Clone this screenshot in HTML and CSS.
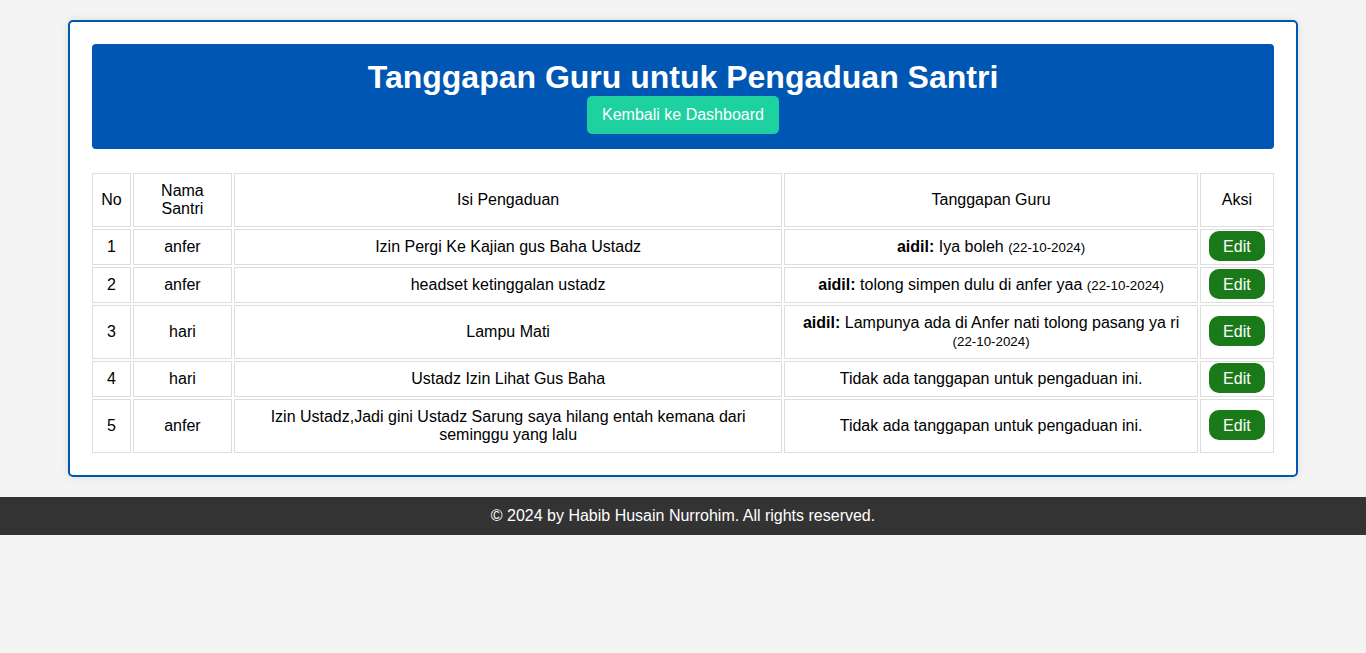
FILE: index.html
```html
<!DOCTYPE html>
<html lang="id">
<head>
<meta charset="utf-8">
<title>Tanggapan Guru</title>
<link rel="stylesheet" href="styles.css">
</head>
<body>
<div class="container">
  <div class="header">
    <h1>Tanggapan Guru untuk Pengaduan Santri</h1>
    <a class="btn-back" href="#">Kembali ke Dashboard</a>
  </div>
  <table class="tbl">
    <thead>
      <tr>
        <th>No</th>
        <th>Nama Santri</th>
        <th>Isi Pengaduan</th>
        <th>Tanggapan Guru</th>
        <th>Aksi</th>
      </tr>
    </thead>
    <tbody>
      <tr>
        <td>1</td>
        <td>anfer</td>
        <td>Izin Pergi Ke Kajian gus Baha Ustadz</td>
        <td><strong>aidil:</strong> Iya boleh <small>(22-10-2024)</small></td>
        <td><a class="btn-edit" href="#">Edit</a></td>
      </tr>
      <tr>
        <td>2</td>
        <td>anfer</td>
        <td>headset ketinggalan ustadz</td>
        <td><strong>aidil:</strong> tolong simpen dulu di anfer yaa <small>(22-10-2024)</small></td>
        <td><a class="btn-edit" href="#">Edit</a></td>
      </tr>
      <tr>
        <td>3</td>
        <td>hari</td>
        <td>Lampu Mati</td>
        <td><strong>aidil:</strong> Lampunya ada di Anfer nati tolong pasang ya ri <small>(22-10-2024)</small></td>
        <td><a class="btn-edit" href="#">Edit</a></td>
      </tr>
      <tr>
        <td>4</td>
        <td>hari</td>
        <td>Ustadz Izin Lihat Gus Baha</td>
        <td>Tidak ada tanggapan untuk pengaduan ini.</td>
        <td><a class="btn-edit" href="#">Edit</a></td>
      </tr>
      <tr>
        <td>5</td>
        <td>anfer</td>
        <td>Izin Ustadz,Jadi gini Ustadz Sarung saya hilang entah kemana dari seminggu yang lalu</td>
        <td>Tidak ada tanggapan untuk pengaduan ini.</td>
        <td><a class="btn-edit" href="#">Edit</a></td>
      </tr>
    </tbody>
  </table>
</div>
<footer class="footer">&copy; 2024 by Habib Husain Nurrohim. All rights reserved.</footer>
</body>
</html>
```
FILE: styles.css
```css
html, body {
  margin: 0;
  padding: 0;
}
body {
  background: #f4f4f4;
  font-family: "Liberation Sans", Arial, sans-serif;
  font-size: 16px;
  color: #000;
}
.container {
  box-sizing: border-box;
  width: 90%;
  margin: 20px auto;
  background: #fff;
  border: 2px solid #0056b3;
  border-radius: 5px;
  padding: 20px;
  box-shadow: 0 0 10px rgba(0, 0, 0, 0.1);
}
.header {
  background: #0056b3;
  color: #fff;
  text-align: center;
  margin: 2px 2px 22px;
  padding: 15px 20px 15px;
  border-radius: 4px;
}
.header h1 {
  margin: 0;
  font-size: 32px;
  font-weight: bold;
}
.btn-back {
  display: inline-block;
  background: #1dd1a1;
  color: #fff;
  text-decoration: none;
  padding: 10px 15px;
  border-radius: 5px;
}
.tbl {
  width: 100%;
  border-collapse: separate;
  border-spacing: 2px;
}
.tbl th, .tbl td {
  border: 1px solid #ddd;
  padding: 8px;
  text-align: center;
  font-weight: normal;
}
.btn-edit {
  background: #1a7a1a;
  color: #fff;
  text-decoration: none;
  padding: 7px 14px 6px;
  border-radius: 10px;
}
.footer {
  background: #333;
  color: #fff;
  text-align: center;
  padding: 10px;
}
```
